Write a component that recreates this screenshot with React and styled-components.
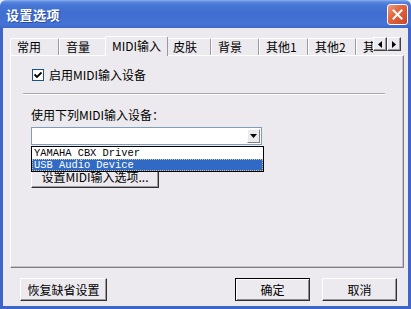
import React from "react";
import styled, { createGlobalStyle } from "styled-components";

const Global = createGlobalStyle`
  html, body { margin: 0; padding: 0; background: #ECEAEE; }
  body { font-family: "Noto Sans CJK SC", "Liberation Sans", sans-serif; font-size: 12px; color: #000; }
  * { box-sizing: border-box; }
`;

const Window = styled.div`
  width: 411px;
  height: 309px;
  display: flex;
  flex-direction: column;
  background: #ECEAEE;
`;

const TitleBar = styled.div`
  height: 28px;
  flex: none;
  display: flex;
  align-items: center;
  justify-content: space-between;
  padding: 0 3px 0 6px;
  background: linear-gradient(#8fb0ef 0px, #5a88e0 2px, #4676d6 5px, #3f6dd0 14px, #4473d6 24px, #3d68cc 28px);
  border-radius: 6px 6px 0 0;
`;

const Title = styled.span`
  color: #fff;
  font-weight: bold;
  font-size: 13px;
  line-height: 1;
  letter-spacing: 0.5px;
  text-shadow: 1px 1px 0 #2a4c9c;
  margin-top: 1px;
`;

const CloseButton = styled.div`
  width: 21px;
  height: 21px;
  border: 1px solid #fff;
  border-radius: 3px;
  background: linear-gradient(135deg, #f09a7c 0%, #e2673f 40%, #c9472a 100%);
  display: flex;
  align-items: center;
  justify-content: center;
`;

const Body = styled.div`
  flex: 1;
  display: flex;
  flex-direction: column;
  border: 3px solid #3e66c8;
  border-top: none;
  padding: 8px 4px 5px 7px;
`;

const TabStrip = styled.div`
  height: 19px;
  flex: none;
  display: flex;
  align-items: flex-end;
`;

const TabViewport = styled.div`
  width: 363px;
  height: 20px;
  margin-bottom: -1px;
  display: flex;
  align-items: flex-end;
  overflow: hidden;
  position: relative;
  z-index: 1;
`;

const Tab = styled.div`
  flex: none;
  width: ${(p) => p.$w}px;
  height: ${(p) => (p.$active ? 20 : 17)}px;
  margin: 0 ${(p) => (p.$active ? -2 : 0)}px ${(p) => (p.$active ? 0 : 1)}px;
  padding-top: ${(p) => (p.$active ? 2 : 1)}px;
  padding-left: ${(p) => (p.$active ? 0 : 6)}px;
  text-align: ${(p) => (p.$active ? "center" : "left")};
  background: #ECEAEE;
  border-left: 1px solid #fff;
  border-top: 1px solid #fff;
  border-right: 1px solid #9a9aa0;
  border-radius: 2px 2px 0 0;
  line-height: 14px;
  white-space: nowrap;
  position: relative;
  z-index: ${(p) => (p.$active ? 2 : 1)};
`;

const ScrollArrows = styled.div`
  display: flex;
  align-self: flex-start;
  margin-top: 1px;
`;

const ArrowButton = styled.div`
  width: 14px;
  height: 14px;
  background: #ECEAEE;
  border-top: 1px solid #fff;
  border-left: 1px solid #fff;
  border-right: 1px solid #404040;
  border-bottom: 1px solid #404040;
  box-shadow: inset -1px -1px 0 #9a9aa0;
  display: flex;
  align-items: center;
  justify-content: center;
`;

const Panel = styled.div`
  height: 213px;
  flex: none;
  border-top: 1px solid #fff;
  border-left: 1px solid #fff;
  border-right: 1px solid #7e7e84;
  border-bottom: 1px solid #7e7e84;
  box-shadow: inset -1px -1px 0 #c4c3c8;
  display: flex;
  flex-direction: column;
  padding: 12px 0 0 20px;
  background: #ECEAEE;
`;

const CheckRow = styled.label`
  display: flex;
  align-items: center;
  gap: 5px;
  height: 14px;
  line-height: 14px;
`;

const CheckBox = styled.span`
  width: 12px;
  height: 12px;
  margin-left: 1px;
  background: #fff;
  border: 1px solid #1c5180;
  display: flex;
  align-items: center;
  justify-content: center;
`;

const Separator = styled.div`
  margin: 11px 18px 0 -8px;
  height: 2px;
  border-top: 1px solid #aca9b0;
  border-bottom: 1px solid #fff;
`;

const FieldLabel = styled.div`
  margin-top: 13px;
  height: 14px;
  line-height: 14px;
`;

const ComboWrap = styled.div`
  position: relative;
  margin-top: 5px;
  width: 231px;
`;

const ComboBox = styled.div`
  height: 18px;
  background: #fff;
  border: 1px solid #7f9db9;
  display: flex;
  justify-content: flex-end;
  align-items: center;
  padding-right: 1px;
`;

const DropButton = styled.div`
  width: 13px;
  height: 14px;
  background: #ECEAEE;
  border-top: 1px solid #fff;
  border-left: 1px solid #fff;
  border-right: 1px solid #808080;
  border-bottom: 1px solid #808080;
  display: flex;
  align-items: center;
  justify-content: center;
`;

const DropList = styled.div`
  position: absolute;
  left: 0;
  top: 19px;
  width: 233px;
  background: #fff;
  border: 1px solid #000;
  z-index: 5;
`;

const ListItem = styled.div`
  height: 12px;
  line-height: 12px;
  padding-left: 2px;
  font-family: "Liberation Mono", "DejaVu Sans Mono", monospace;
  font-size: 10.4px;
  letter-spacing: 0px;
  white-space: nowrap;
  color: ${(p) => (p.$selected ? "#fff" : "#000")};
  background: ${(p) => (p.$selected ? "#316AC5" : "#fff")};
  outline: ${(p) => (p.$selected ? "1px dotted #d8c880" : "none")};
  outline-offset: -1px;
`;

const Button = styled.div`
  width: ${(p) => p.$w}px;
  height: 23px;
  flex: none;
  display: flex;
  align-items: center;
  justify-content: center;
  background: #ECEAEE;
  border-top: 1px solid ${(p) => (p.$default ? "#000" : "#fff")};
  border-left: 1px solid ${(p) => (p.$default ? "#000" : "#fff")};
  border-right: 1px solid #303030;
  border-bottom: 1px solid #303030;
  box-shadow: ${(p) =>
    p.$default
      ? "inset 1px 1px 0 #fff, inset -1px -1px 0 #8a8a8e"
      : "inset -1px -1px 0 #9a9aa0"};
  line-height: 1;
  white-space: nowrap;
`;

const SetupButton = styled(Button)`
  margin-top: 20px;
`;

const ButtonRow = styled.div`
  display: flex;
  align-items: center;
  margin-top: 10px;
  padding: 0 7px 0 10px;
`;

const Spacer = styled.div`
  flex: 1;
`;

const Gap = styled.div`
  width: 12px;
  flex: none;
`;

const tabs = [
  { label: "常用", w: 49 },
  { label: "音量", w: 48 },
  { label: "MIDI输入", w: 63, active: true },
  { label: "皮肤", w: 45 },
  { label: "背景", w: 48 },
  { label: "其他1", w: 49 },
  { label: "其他2", w: 48 },
  { label: "其他3", w: 48 },
];

export default function App() {
  return (
    <>
      <Global />
      <Window>
        <TitleBar>
          <Title>设置选项</Title>
          <CloseButton>
            <svg width="11" height="11" viewBox="0 0 11 11">
              <path d="M1.5 1.5 L9.5 9.5 M9.5 1.5 L1.5 9.5" stroke="#fff" strokeWidth="2" strokeLinecap="square" />
            </svg>
          </CloseButton>
        </TitleBar>
        <Body>
          <TabStrip>
            <TabViewport>
              {tabs.map((t) => (
                <Tab key={t.label} $w={t.w} $active={t.active}>
                  {t.label}
                </Tab>
              ))}
            </TabViewport>
            <ScrollArrows>
              <ArrowButton>
                <svg width="4" height="7" viewBox="0 0 4 7">
                  <path d="M4 0 L0 3.5 L4 7 Z" fill="#000" />
                </svg>
              </ArrowButton>
              <ArrowButton>
                <svg width="4" height="7" viewBox="0 0 4 7">
                  <path d="M0 0 L4 3.5 L0 7 Z" fill="#000" />
                </svg>
              </ArrowButton>
            </ScrollArrows>
          </TabStrip>
          <Panel>
            <CheckRow>
              <CheckBox>
                <svg width="8" height="8" viewBox="0 0 8 8">
                  <path d="M0.5 3.5 L3 6 L7.5 1.5" stroke="#000" strokeWidth="1.8" fill="none" />
                </svg>
              </CheckBox>
              启用MIDI输入设备
            </CheckRow>
            <Separator />
            <FieldLabel>使用下列MIDI输入设备：</FieldLabel>
            <ComboWrap>
              <ComboBox>
                <DropButton>
                  <svg width="7" height="4" viewBox="0 0 7 4">
                    <path d="M0 0 L7 0 L3.5 4 Z" fill="#000" />
                  </svg>
                </DropButton>
              </ComboBox>
              <DropList>
                <ListItem>YAMAHA CBX Driver</ListItem>
                <ListItem $selected>USB Audio Device</ListItem>
              </DropList>
            </ComboWrap>
            <SetupButton $w={128}>设置MIDI输入选项...</SetupButton>
          </Panel>
          <ButtonRow>
            <Button $w={87}>恢复缺省设置</Button>
            <Spacer />
            <Button $w={75} $default>确定</Button>
            <Gap />
            <Button $w={75}>取消</Button>
          </ButtonRow>
        </Body>
      </Window>
    </>
  );
}
